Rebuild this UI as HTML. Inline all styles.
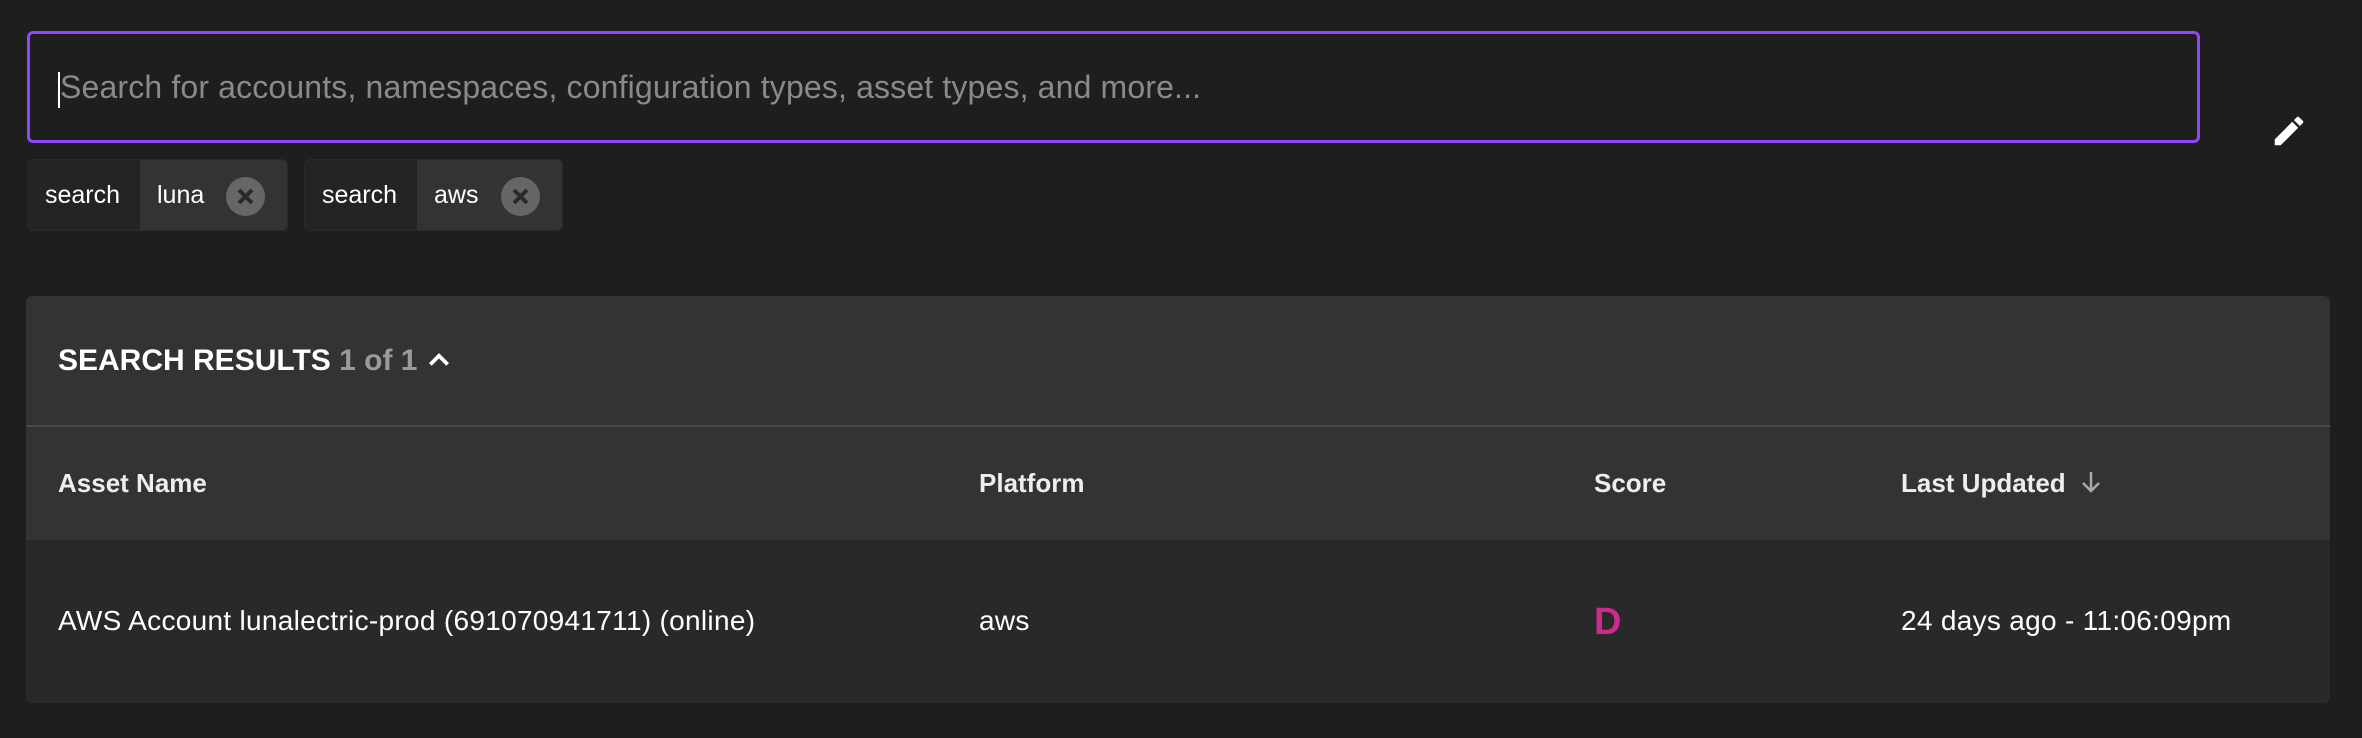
<!DOCTYPE html>
<html><head><meta charset="utf-8"><style>
body{margin:0;width:2362px;height:738px;background:#1e1e1d;font-family:"Liberation Sans",sans-serif;color:#fff;position:relative;overflow:hidden}
.input{position:absolute;left:27px;top:31px;width:2167px;height:106px;border:3px solid #9146ff;border-radius:6px;box-sizing:content-box}
.ph{position:absolute;left:30px;top:35px;font-size:32px;color:#8a8a8a;letter-spacing:0.15px}
.caret{position:absolute;left:28px;top:38px;width:2px;height:36px;background:#fff}
.chip{position:absolute;top:159px;height:72px;border-radius:6px;background:#333;overflow:hidden;border:1px solid #2a2a2a;box-sizing:border-box}
.chip .k{position:absolute;left:0;top:0;bottom:0;width:112px;box-sizing:border-box;background:#242424;font-size:25px;line-height:70px;padding-left:17px}
.chip .v{position:absolute;top:0;font-size:25px;line-height:70px}
.x{position:absolute;top:17px;width:39px;height:39px;border-radius:50%;background:#666}
.card{position:absolute;left:26px;top:296px;width:2304px;height:407px;background:#333;border-radius:6px;overflow:hidden}
.title{position:absolute;left:32px;top:48px;font-size:30px;font-weight:bold}
.title span{color:#9a9a9a}
.div{position:absolute;left:0;right:0;top:129px;height:2px;background:#4a4a4a}
.th{position:absolute;top:172px;font-size:26px;font-weight:bold;color:#eee}
.row{position:absolute;left:0;right:0;top:244px;bottom:0;background:#292929}
.td{position:absolute;top:309px;font-size:28px;letter-spacing:0.3px}
</style></head><body>
<div class="input"><div class="caret"></div><div class="ph">Search for accounts, namespaces, configuration types, asset types, and more...</div></div>
<svg style="position:absolute;left:2270px;top:112px" width="38" height="38" viewBox="0 0 24 24"><path fill="#fff" d="M3 17.25V21h3.75L17.81 9.94l-3.75-3.75L3 17.25zM20.71 7.04a1 1 0 0 0 0-1.41l-2.34-2.34a1 1 0 0 0-1.41 0l-1.830 1.83 3.75 3.75 1.83-1.83z"/></svg>
<div class="chip" style="left:27px;width:261px"><div class="k">search</div><div class="v" style="left:129px">luna</div>
<svg class="x" style="left:198px" viewBox="0 0 39 39"><path d="M13 13L26 26M26 13L13 26" stroke="#2a2a2a" stroke-width="4"/></svg></div>
<div class="chip" style="left:304px;width:259px"><div class="k">search</div><div class="v" style="left:129px">aws</div>
<svg class="x" style="left:196px" viewBox="0 0 39 39"><path d="M13 13L26 26M26 13L13 26" stroke="#2a2a2a" stroke-width="4"/></svg></div>
<div class="card">
<div class="title">SEARCH RESULTS <span>1 of 1</span> <svg width="26" height="20" viewBox="0 0 24 18" style="vertical-align:1px"><path d="M4 14L12 6L20 14" stroke="#fff" stroke-width="3.5" fill="none"/></svg></div>
<div class="div"></div>
<div class="th" style="left:32px">Asset Name</div>
<div class="th" style="left:953px">Platform</div>
<div class="th" style="left:1568px">Score</div>
<div class="th" style="left:1875px">Last Updated <svg width="24" height="26" viewBox="0 0 24 26" style="vertical-align:-3px;margin-left:6px"><path d="M12 3V22M4 14L12 22L20 14" stroke="#aaa" stroke-width="2.5" fill="none"/></svg></div>
<div class="row"></div>
<div class="td" style="left:32px">AWS Account lunalectric-prod (691070941711) (online)</div>
<div class="td" style="left:953px">aws</div>
<div class="td" style="left:1568px;top:305px;font-size:38px;font-weight:bold;color:#cc2a8e">D</div>
<div class="td" style="left:1875px">24 days ago - 11:06:09pm</div>
</div>
</body></html>
